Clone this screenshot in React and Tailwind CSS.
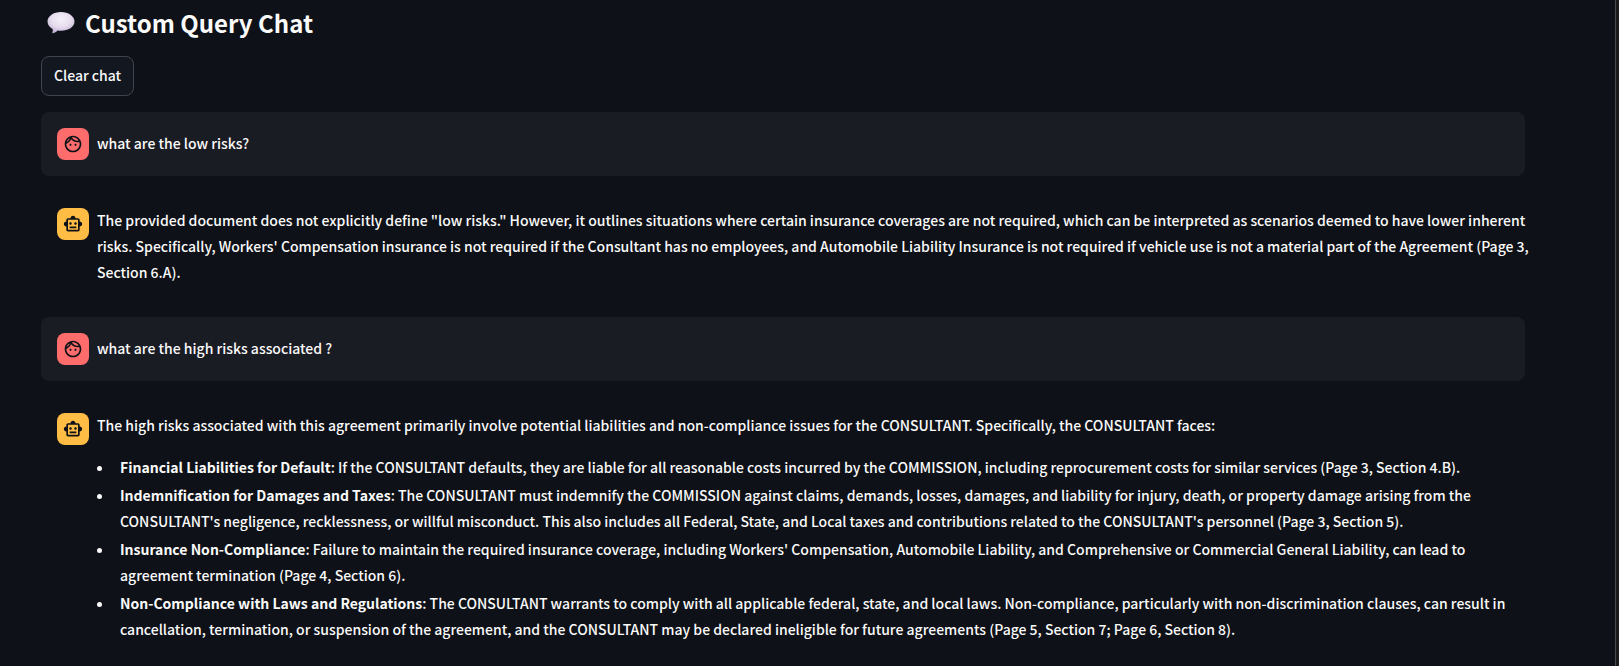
const risks = [
  {
    title: "Financial Liabilities for Default",
    text: "If the CONSULTANT defaults, they are liable for all reasonable costs incurred by the COMMISSION, including reprocurement costs for similar services (Page 3, Section 4.B).",
  },
  {
    title: "Indemnification for Damages and Taxes",
    text: "The CONSULTANT must indemnify the COMMISSION against claims, demands, losses, damages, and liability for injury, death, or property damage arising from the CONSULTANT's negligence, recklessness, or willful misconduct. This also includes all Federal, State, and Local taxes and contributions related to the CONSULTANT's personnel (Page 3, Section 5).",
  },
  {
    title: "Insurance Non-Compliance",
    text: "Failure to maintain the required insurance coverage, including Workers' Compensation, Automobile Liability, and Comprehensive or Commercial General Liability, can lead to agreement termination (Page 4, Section 6).",
  },
  {
    title: "Non-Compliance with Laws and Regulations",
    text: "The CONSULTANT warrants to comply with all applicable federal, state, and local laws. Non-compliance, particularly with non-discrimination clauses, can result in cancellation, termination, or suspension of the agreement, and the CONSULTANT may be declared ineligible for future agreements (Page 5, Section 7; Page 6, Section 8).",
  },
];

function FaceIcon() {
  return (
    <svg viewBox="0 0 24 24" className="size-5" fill="currentColor" aria-hidden="true">
      <path d="M10.25 13c0 .69-.56 1.25-1.25 1.25S7.75 13.69 7.75 13s.56-1.25 1.25-1.25 1.25.56 1.25 1.25zM15 11.75c-.69 0-1.25.56-1.25 1.25s.56 1.25 1.25 1.25 1.25-.56 1.25-1.25-.56-1.25-1.25-1.25zm7 .25c0 5.52-4.48 10-10 10S2 17.52 2 12 6.48 2 12 2s10 4.480 10 10zM10.660 4.120C12.060 6.440 14.600 8 17.500 8c.46 0 .91-.05 1.340-.12C17.440 5.560 14.900 4 12 4c-.46 0-.91.05-1.340.12zM4.420 9.470c1.710-.97 3.030-2.550 3.660-4.440C6.370 6 5.050 7.580 4.420 9.470zM20 12c0-.78-.12-1.530-.33-2.240-.7.15-1.420.24-2.170.24-3.130 0-5.920-1.440-7.760-3.690C8.690 8.870 6.600 10.880 4 11.860c.01.04 0 .09 0 .14 0 4.410 3.590 8 8 8s8-3.590 8-8z" />
    </svg>
  );
}

function RobotIcon() {
  return (
    <svg viewBox="0 0 24 24" className="size-5" fill="currentColor" aria-hidden="true">
      <path d="M20 9V7c0-1.100-.9-2-2-2h-3c0-1.660-1.340-3-3-3S9 3.340 9 5H6c-1.100 0-2 .9-2 2v2c-1.660 0-3 1.340-3 3s1.340 3 3 3v4c0 1.100.9 2 2 2h12c1.100 0 2-.9 2-2v-4c1.660 0 3-1.340 3-3s-1.340-3-3-3zm-2 10H6V7h12v12zm-9-6c-.83 0-1.500-.67-1.500-1.500S8.170 10 9 10s1.500.67 1.500 1.500S9.830 13 9 13zm7.500-1.500c0 .83-.67 1.500-1.500 1.500s-1.500-.67-1.500-1.500.67-1.500 1.500-1.500 1.500.67 1.500 1.500zM8 15h8v2H8v-2z" />
    </svg>
  );
}

function SpeechBubble() {
  return (
    <svg viewBox="0 0 28 22" className="h-[22px] w-7 shrink-0" aria-hidden="true">
      <defs>
        <radialGradient id="bubble" cx="0.5" cy="0.35" r="0.62">
          <stop offset="0" stopColor="#f4f0f8" />
          <stop offset="0.6" stopColor="#e6dcee" />
          <stop offset="1" stopColor="#c3b4d6" />
        </radialGradient>
      </defs>
      <path
        d="M14 0C21.500 0 27.500 4.200 27.500 9.500S21.500 18.800 14 18.800c-1.200 0-2.300-.1-3.400-.3-1.300 1.300-2.800 2.200-4.700 2.700-.6.100-.8-.3-.5-.7.500-1.100.5-2.300.2-3.500C2.500 15.300.5 12.600.5 9.500.5 4.200 6.500 0 14 0z"
        fill="url(#bubble)"
      />
    </svg>
  );
}

function UserMessage({ children }) {
  return (
    <article className="flex items-start gap-2 rounded-lg bg-[#1a1c24] p-4">
      <div className="flex size-8 shrink-0 items-center justify-center rounded-lg bg-[#ff6c6c] text-[#0e1117]">
        <FaceIcon />
      </div>
      <p className="min-w-0 flex-1 pt-0.5">{children}</p>
    </article>
  );
}

function AssistantMessage({ children }) {
  return (
    <article className="-mr-1 flex items-start gap-2 pt-[15px] pb-4 pl-4">
      <div className="mt-px flex size-8 shrink-0 items-center justify-center rounded-lg bg-[#ffbd45] text-[#0e1117]">
        <RobotIcon />
      </div>
      <div className="min-w-0 flex-1">{children}</div>
    </article>
  );
}

export default function App() {
  return (
    <div className="min-h-screen bg-[#181a1b] pr-[3px] font-['Noto_Sans_CJK_JP','Noto_Sans',sans-serif] text-[14px] leading-[26px] font-medium text-[#fafafa]">
      <main className="flex min-h-screen flex-col gap-4 border-r border-[#4a4a4a] bg-[#0e1117] pr-[90px] pl-[41px]">
        <h1 className="flex h-10 items-center gap-2.5 pt-1.5 pl-1.5 text-2xl font-bold">
          <SpeechBubble />
          Custom Query Chat
        </h1>
        <button
          type="button"
          className="h-10 self-start rounded-lg border border-[#41444c] bg-[#131720] px-3 pb-0.5"
        >
          Clear chat
        </button>
        <UserMessage>what are the low risks?</UserMessage>
        <AssistantMessage>
          <p>
            The provided document does not explicitly define "low risks." However, it outlines situations where certain insurance coverages are not required, which can be interpreted as scenarios deemed to have lower inherent risks. Specifically, Workers' Compensation insurance is not required if the Consultant has no employees, and Automobile Liability Insurance is not required if vehicle use is not a material part of the Agreement (Page 3, Section 6.A).
          </p>
        </AssistantMessage>
        <UserMessage>what are the high risks associated ?</UserMessage>
        <AssistantMessage>
          <p>
            The high risks associated with this agreement primarily involve potential liabilities and non-compliance issues for the CONSULTANT. Specifically, the CONSULTANT faces:
          </p>
          <ul className="mt-4 flex list-disc flex-col gap-0.5 pr-4 pl-[17px]">
            {risks.map((risk) => (
              <li key={risk.title} className="pl-1.5">
                <strong className="font-bold">{risk.title}</strong>: {risk.text}
              </li>
            ))}
          </ul>
        </AssistantMessage>
      </main>
    </div>
  );
}
